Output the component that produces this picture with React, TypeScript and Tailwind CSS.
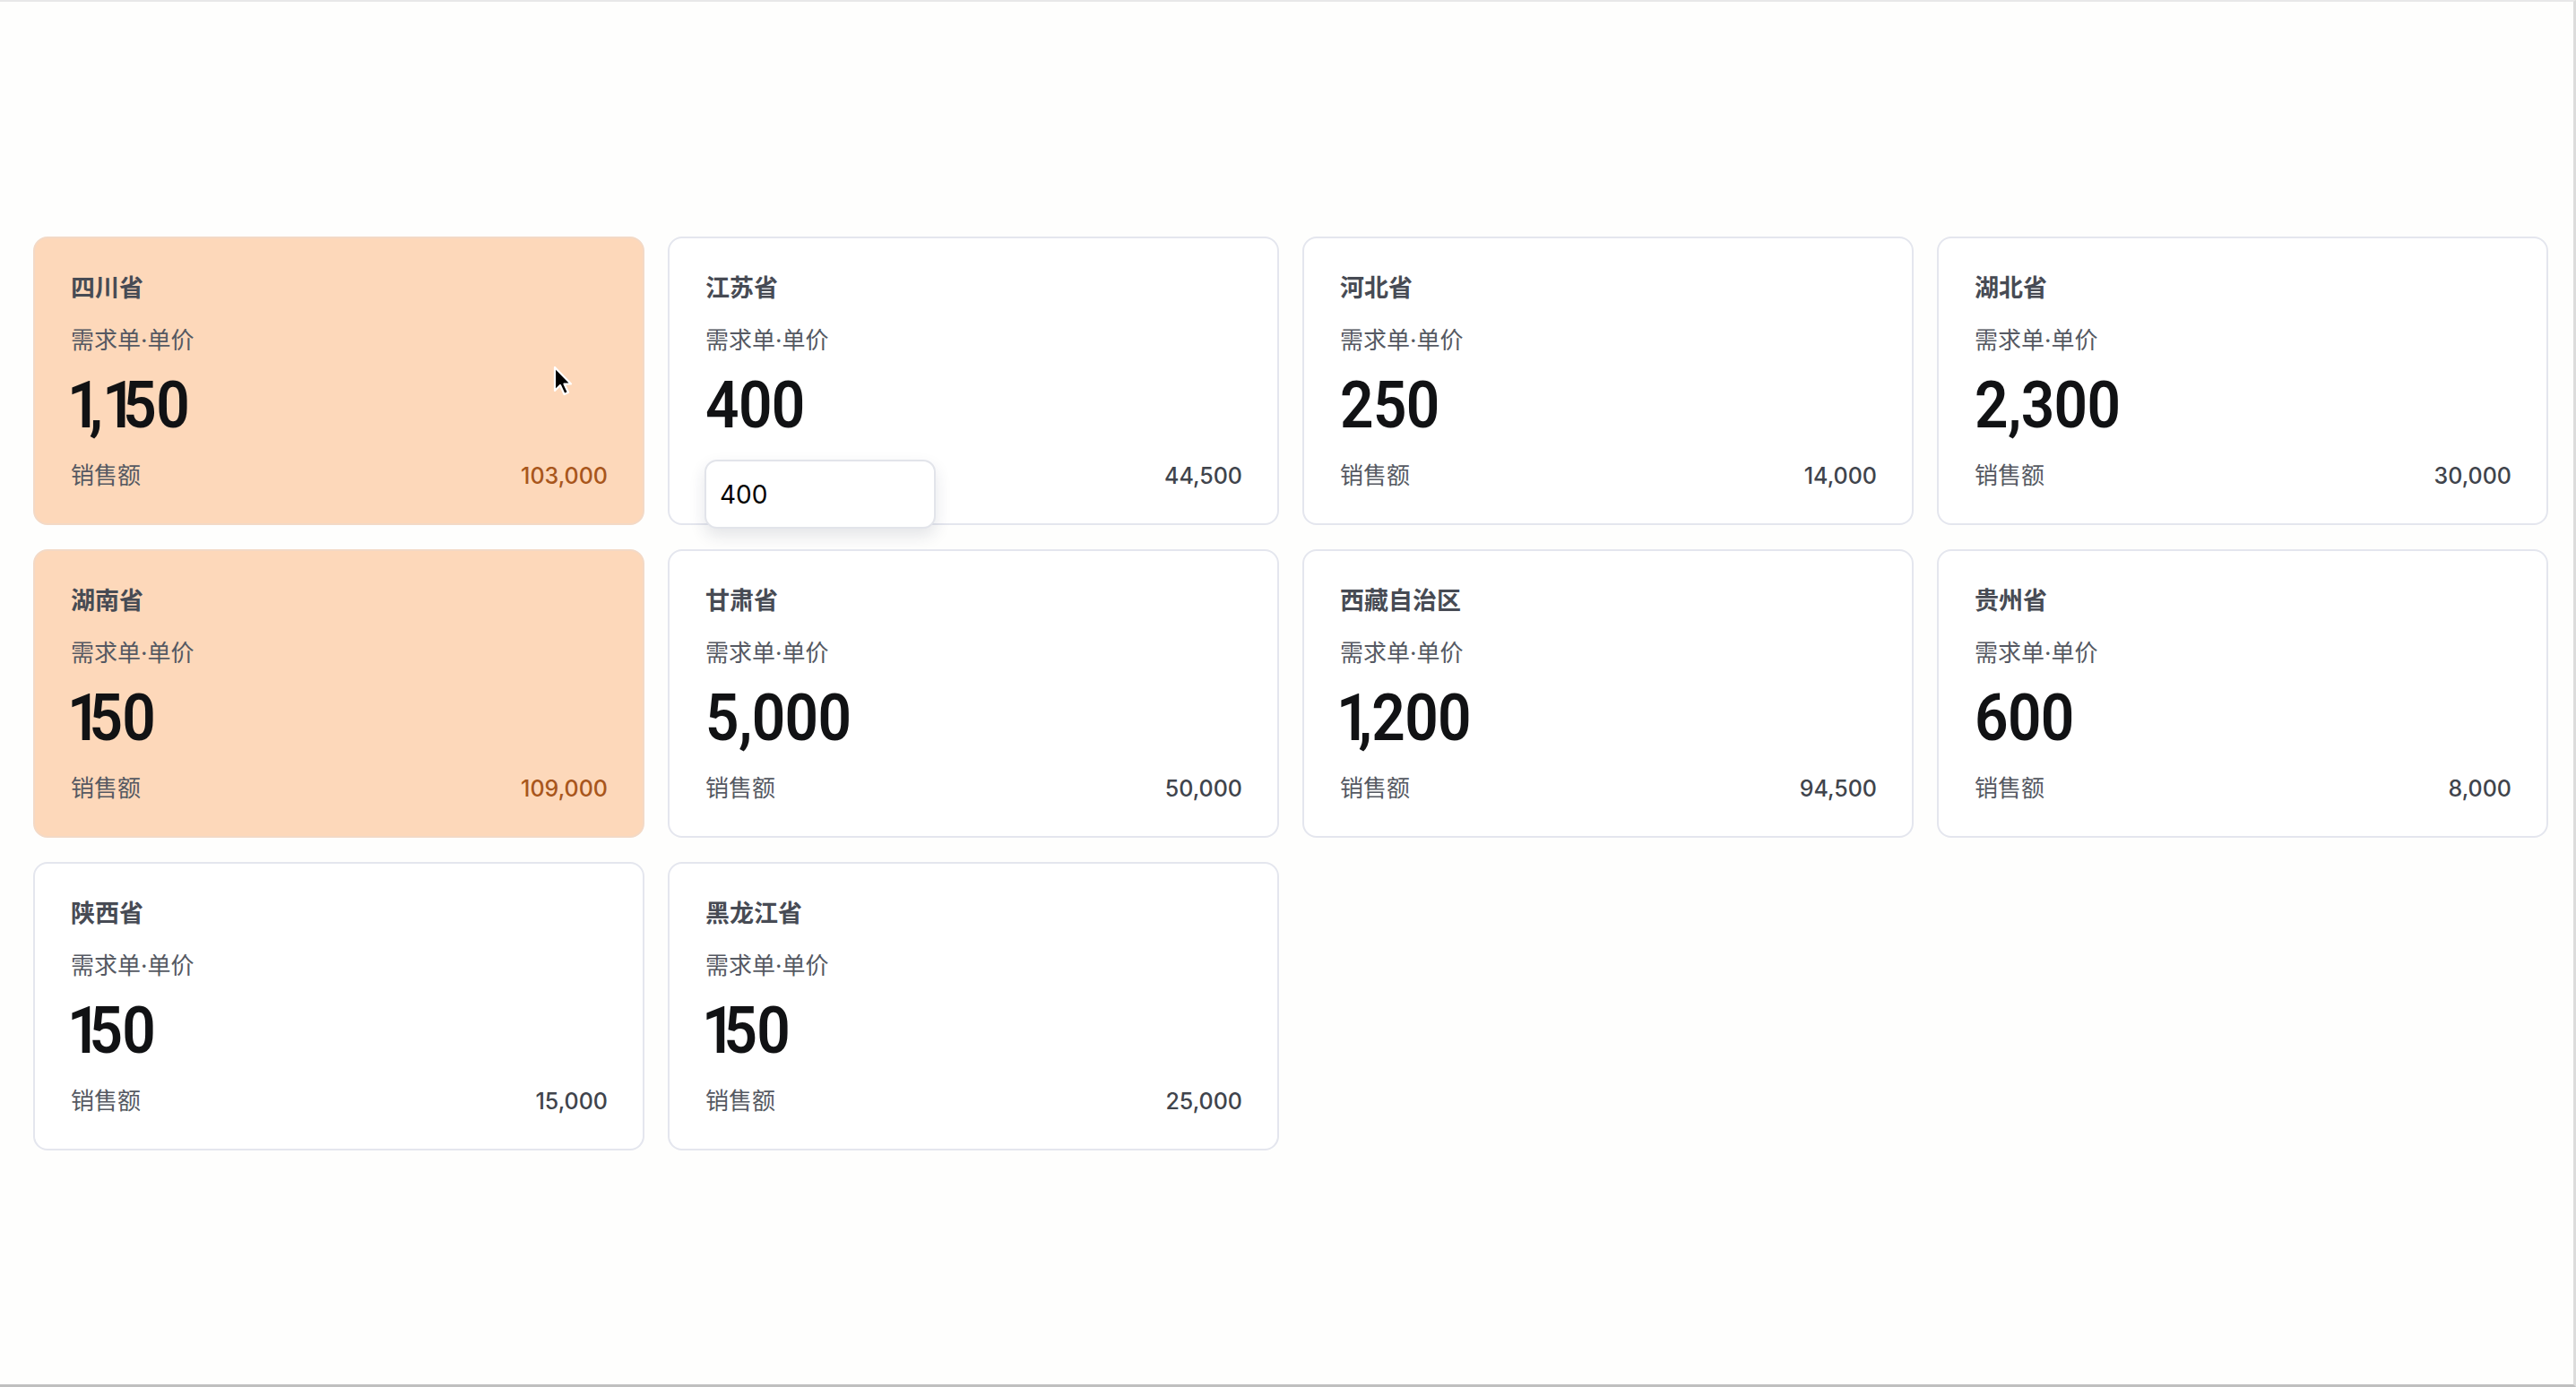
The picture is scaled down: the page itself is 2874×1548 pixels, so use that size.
import React from "react";

interface Region {
  name: string;
  price: string;
  sales: string;
  hot?: boolean;
}

const regions: Region[] = [
  { name: "四川省", price: "1,150", sales: "103,000", hot: true },
  { name: "江苏省", price: "400", sales: "44,500" },
  { name: "河北省", price: "250", sales: "14,000" },
  { name: "湖北省", price: "2,300", sales: "30,000" },
  { name: "湖南省", price: "150", sales: "109,000", hot: true },
  { name: "甘肃省", price: "5,000", sales: "50,000" },
  { name: "西藏自治区", price: "1,200", sales: "94,500" },
  { name: "贵州省", price: "600", sales: "8,000" },
  { name: "陕西省", price: "150", sales: "15,000" },
  { name: "黑龙江省", price: "150", sales: "25,000" },
];

const cjk = "font-['Inter','Noto_Sans_CJK_SC',sans-serif]";

function Cursor() {
  return (
    <svg
      className="absolute left-[614px] top-[404px] pointer-events-none"
      width="26"
      height="38"
      viewBox="0 0 26 38"
    >
      <path
        d="M5 4 L5 30 L11 24 L15.5 34 L20 32 L15.5 22.5 L23 22.5 Z"
        fill="#000"
        stroke="#fff"
        strokeWidth="2.2"
        strokeLinejoin="round"
      />
    </svg>
  );
}

// the "1" glyph in Roboto is wide, so tighten it to read like a DIN-style figure
function Figure({ value }: { value: string }) {
  return (
    <>
      {value.split("").map((ch, i) =>
        ch === "1" ? (
          <span key={i} className={i === 0 ? "-ml-[0.06em] tracking-[-0.2em]" : "tracking-[-0.22em]"}>
            {ch}
          </span>
        ) : (
          <span key={i}>{ch}</span>
        )
      )}
    </>
  );
}

function RegionCard({ region, popover }: { region: Region; popover?: string }) {
  const bg = region.hot ? "bg-[#fdd8ba] border-[#f3d9c6]" : "bg-white border-[#e4e6ee]";
  return (
    <div
      className={`relative flex flex-col rounded-[16px] border-2 ${bg} pl-[40px] pr-[39px] pt-[38px] pb-[36px] ${cjk}`}
    >
      <div className="text-[27px] leading-[36px] font-semibold text-[#474b54]">{region.name}</div>
      <div className="mt-[23px] text-[26px] leading-[34px] text-[#555962]">需求单·单价</div>
      <div className="mt-[18px] h-[74px] leading-[74px] whitespace-nowrap">
        <span className="inline-block origin-left scale-x-[0.9] text-[73px] font-semibold tracking-[-0.01em] text-[#111214] font-['Roboto',sans-serif]">
          <Figure value={region.price} />
        </span>
      </div>
      <div className="mt-[25px] flex items-center justify-between text-[26px] leading-[34px]">
        <span className="text-[#555962]">销售额</span>
        <span
          className={`font-medium font-['Inter',sans-serif] text-[25px] ${
            region.hot ? "text-[#a8561c]" : "text-[#40444c]"
          }`}
        >
          {region.sales}
        </span>
      </div>

      {popover && (
        <div className="absolute left-[39px] top-[247px] w-[258px] h-[77px] flex items-center pl-[15px] bg-white border-2 border-[#e2e4ea] rounded-[14px] shadow-[0_8px_18px_rgba(30,40,70,0.12)] text-[28px] text-black font-['Inter',sans-serif]">
          {popover}
        </div>
      )}
    </div>
  );
}

export default function App() {
  return (
    <div className="relative h-[1548px] w-full overflow-hidden bg-[#fefefd] border-t-2 border-t-[#e8e8e8] border-r-[3px] border-r-[#dcdcdc] border-b-[3px] border-b-[#bfbfbf]">
      <div className="grid grid-cols-4 gap-x-[26px] gap-y-[27px] pt-[262px] pl-[37px] pr-[28px]">
        {regions.map((r) => (
          <RegionCard key={r.name} region={r} popover={r.name === "江苏省" ? "400" : undefined} />
        ))}
      </div>
      <Cursor />
    </div>
  );
}
